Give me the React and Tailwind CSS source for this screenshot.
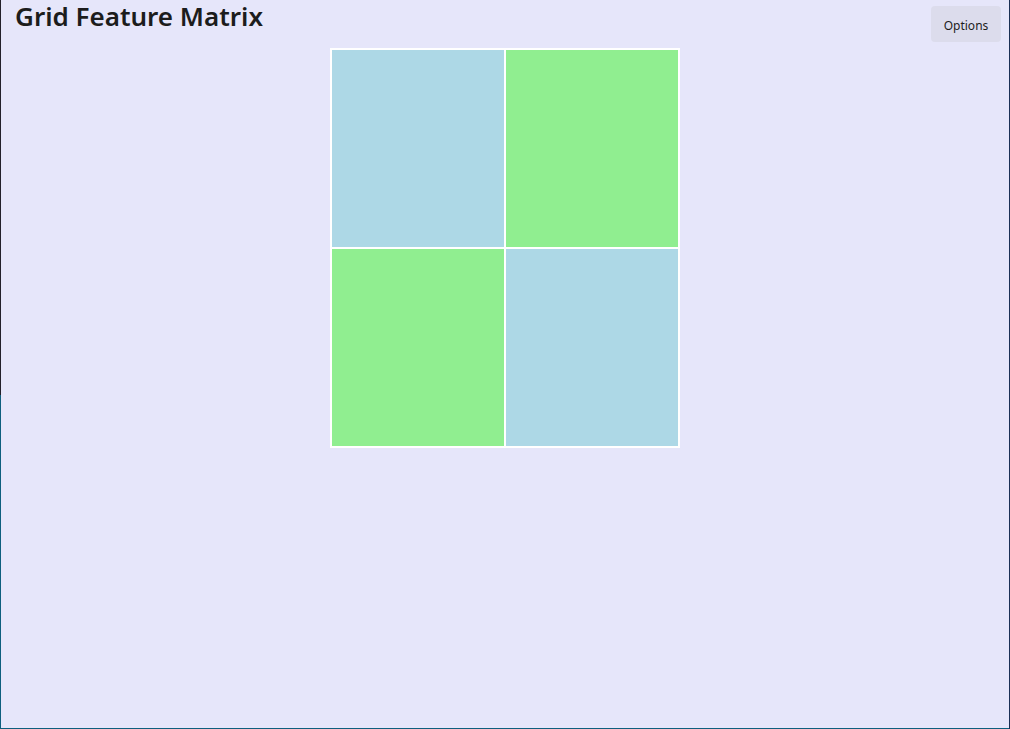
export default function App() {
  return (
    <div className="w-[1010px] h-[729px] flex bg-[#0e5f7e]">
      <div className="w-px h-full flex flex-col">
        <div className="h-[395px] bg-[#23202a]" />
        <div className="flex-1 bg-[#0e5f7e]" />
      </div>
      <div className="flex-1 flex flex-col">
        <div className="flex-1 bg-[#e6e6fa] flex flex-col" style={{ fontFamily: '"Noto Sans", "Open Sans", sans-serif' }}>
          <div className="h-[48px] flex justify-between items-start">
            <h1 className="ml-[14px] mt-[-4px] text-[26px] font-semibold leading-[40px] text-[#1c1c1c]">Grid Feature Matrix</h1>
            <button className="mt-[6px] mr-[8px] w-[70px] h-[36px] pt-[3px] rounded-[4px] bg-[#dcdcec] text-[12px] text-[#1c1c1c] flex items-center justify-center">
              Options
            </button>
          </div>
          <div className="mx-auto w-[350px] h-[400px] bg-white p-[2px] grid grid-cols-2 grid-rows-2 gap-[2px]">
            <div className="bg-[#add8e6]" />
            <div className="bg-[#90ee90]" />
            <div className="bg-[#90ee90]" />
            <div className="bg-[#add8e6]" />
          </div>
        </div>
        <div className="h-px bg-[#0e5f7e]" />
      </div>
      <div className="w-px h-full bg-[#1a2f55]" />
    </div>
  );
}
